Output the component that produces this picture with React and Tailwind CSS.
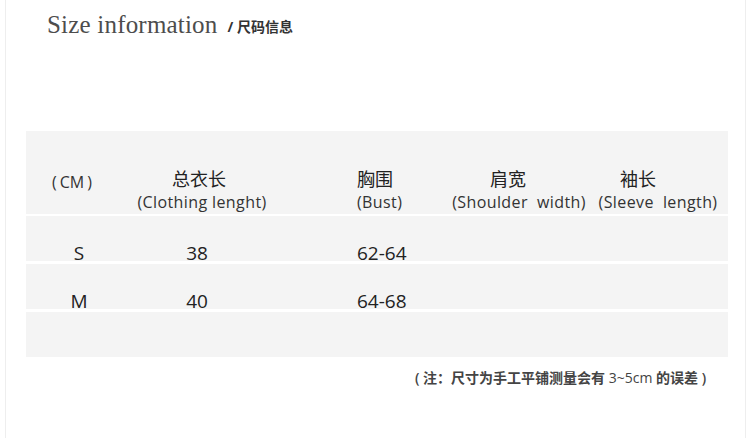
import React from 'react';

const sans = { fontFamily: '"Open Sans", "Noto Sans CJK SC", sans-serif' };

function HeaderCell({ zh, en, zhClass = '', enClass = '', className = '' }) {
  return (
    <div className={`flex flex-col justify-end pb-[2px] ${className}`}>
      <div className={`text-[18px] leading-[22px] text-[#222] ${zhClass}`}>{zh}</div>
      <div className={`mt-[2px] text-[16px] leading-[20px] tracking-[0.4px] text-[#333] whitespace-pre ${enClass}`}>{en}</div>
    </div>
  );
}

function SizeRow({ size, length, bust }) {
  return (
    <div className="grid h-[45px] grid-cols-[92px_162px_170px_138px_140px] items-end bg-[#f4f4f4] text-[19px] leading-4 text-[#222]">
      <div className="pl-[14px] text-center">{size}</div>
      <div className="pr-[4px] text-center">{length}</div>
      <div className="pl-[77px]">{bust}</div>
      <div />
      <div />
    </div>
  );
}

export default function App() {
  return (
    <div className="h-[438px] w-[750px] overflow-hidden bg-white" style={sans}>
      <div className="ml-[5px] h-full w-[741px] border-x border-[#eeeeee]">
        {/* Título */}
        <div className="flex items-center pt-[10px] pl-[41px]">
          <span
            className="text-[25px] leading-[30px] tracking-[0.2px] text-[#4d4d4d]"
            style={{ fontFamily: '"Liberation Serif", serif' }}
          >
            Size information
          </span>
          <span className="ml-[10px] mt-[2px] text-[14px] font-bold text-[#333]">/ 尺码信息</span>
        </div>

        {/* Tabla */}
        <div className="ml-[20px] mt-[91px] w-[702px]">
          <div className="grid h-[83px] grid-cols-[92px_162px_170px_138px_140px] bg-[#f4f4f4]">
            <div className="flex items-end justify-center pb-[22px] text-[16px] leading-[20px] text-[#333]">
              (<span className="mx-[3px]">CM</span>)
            </div>
            <HeaderCell zh="总衣长" en="(Clothing lenght)" enClass="pl-[6px]" className="items-center" />
            <HeaderCell zh="胸围" en="(Bust)" className="pl-[77px]" />
            <HeaderCell zh="肩宽" en="(Shoulder  width)" zhClass="pr-[22px]" className="items-center" />
            <HeaderCell zh="袖长" en="(Sleeve  length)" zhClass="pr-[40px]" className="items-center" />
          </div>
          <div className="mt-[2px]">
            <SizeRow size="S" length="38" bust="62-64" />
          </div>
          <div className="mt-[3px]">
            <SizeRow size="M" length="40" bust="64-68" />
          </div>
          <div className="mt-[3px] h-[45px] bg-[#f4f4f4]" />
        </div>

        {/* Nota */}
        <div className="mt-[11px] pl-[409px] text-[14px] font-semibold leading-[20px] text-[#444]">
          ( 注：尺寸为手工平铺测量会有 <span className="font-normal">3~5cm</span> 的误差 )
        </div>
      </div>
    </div>
  );
}
